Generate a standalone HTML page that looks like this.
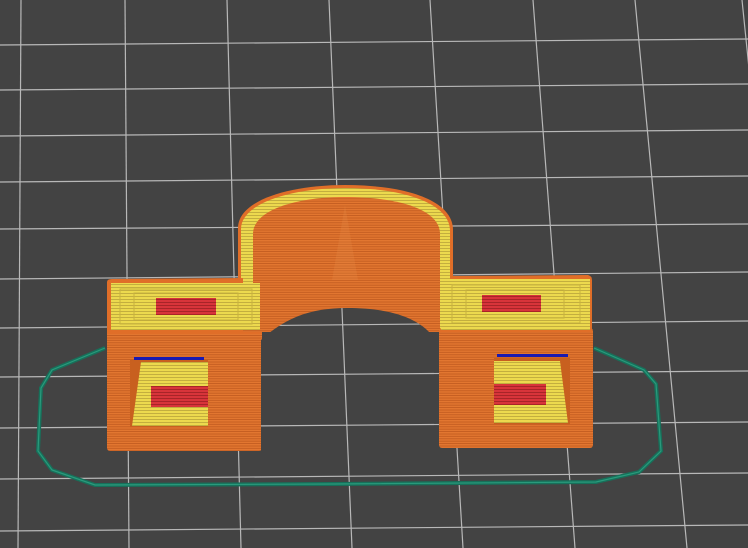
<!DOCTYPE html>
<html><head><style>
html,body{margin:0;padding:0;background:#434343;}
svg{display:block;}
</style></head><body>
<svg width="748" height="548" viewBox="0 0 748 548" xmlns="http://www.w3.org/2000/svg">
<defs>
<pattern id="or" width="4" height="2.4" patternUnits="userSpaceOnUse">
<rect width="4" height="2.4" fill="#e27630"/>
<rect y="1.6" width="4" height="0.8" fill="#bf5a1e"/>
</pattern>
<pattern id="yl" width="4" height="3" patternUnits="userSpaceOnUse">
<rect width="4" height="3" fill="#ecd94e"/>
<rect y="2.2" width="4" height="0.8" fill="#b9a43a"/>
</pattern>
<pattern id="rd" width="3" height="3" patternUnits="userSpaceOnUse">
<rect width="3" height="3" fill="#d8343a"/>
<rect y="2" width="3" height="1" fill="#a82428"/>
</pattern>
<clipPath id="hole"><path d="M261,452 L261,340 C285,318 310,308 347,308 C390,308 420,318 434,338 L434,452 Z"/></clipPath>
<g id="grid" stroke="#b8b8b8" stroke-width="1.2" fill="none">
<line x1="21" y1="0" x2="18" y2="548"/>
<line x1="125" y1="0" x2="129" y2="548"/>
<line x1="227" y1="0" x2="241" y2="548"/>
<line x1="329" y1="0" x2="352" y2="548"/>
<line x1="430" y1="0" x2="463" y2="548"/>
<line x1="533" y1="0" x2="575" y2="548"/>
<line x1="635" y1="0" x2="687" y2="548"/>
<line x1="742" y1="0" x2="798" y2="548"/>
<line x1="0" y1="45" x2="748" y2="39"/>
<line x1="0" y1="90" x2="748" y2="84"/>
<line x1="0" y1="136" x2="748" y2="130"/>
<line x1="0" y1="182" x2="748" y2="176"/>
<line x1="0" y1="229" x2="748" y2="224"/>
<line x1="0" y1="279" x2="748" y2="272"/>
<line x1="0" y1="328" x2="748" y2="321"/>
<line x1="0" y1="377" x2="748" y2="371"/>
<line x1="0" y1="428" x2="748" y2="422"/>
<line x1="0" y1="479" x2="748" y2="473"/>
<line x1="0" y1="531" x2="748" y2="525"/>
</g>
</defs>
<rect width="748" height="548" fill="#434343"/>
<use href="#grid"/>
<path d="M105,348 L52,370 L41,388 L38,451 L52,470 L95,485 L334,484 L596,482 L639,472 L661,451 L656,384 L644,370 L594,348" fill="none" stroke="#17705a" stroke-width="4"/>
<path d="M105,348 L52,370 L41,388 L38,451 L52,470 L95,485 L334,484 L596,482 L639,472 L661,451 L656,384 L644,370 L594,348" fill="none" stroke="#2a9a7c" stroke-width="1.2"/>
<path d="M238,332 L238,228 C238,200 290,185 345,185 C405,185 453,200 453,230 L453,332 Z" fill="#e06e28"/>
<path d="M241,332 L241,229 C241,203 292,188 345,188 C403,188 450,203 450,231 L450,332 Z" fill="url(#yl)"/>
<path d="M253,332 L253,234 C253,210 296,197 345,197 C400,197 440,210 440,234 L440,332 Z" fill="url(#or)"/>
<path d="M332,280 L345,205 L358,280 Z" fill="#e98a48" opacity="0.25"/>
<rect x="107" y="330" width="155" height="121" rx="3" fill="url(#or)"/>
<path d="M107,282 Q107,279 112,279 L243,278 L243,332 L262,332 L262,334 L107,334 Z" fill="#e06e28"/>
<rect x="111" y="283" width="149" height="47" fill="url(#yl)"/>
<rect x="120" y="289" width="132" height="35" fill="none" stroke="#c8b23e" stroke-width="1"/>
<rect x="134" y="293" width="104" height="27" fill="none" stroke="#c8b23e" stroke-width="1"/>
<rect x="156" y="298" width="60" height="17" fill="url(#rd)"/>
<path d="M130,360 L208,360 L208,427 L130,427 Z" fill="#c8601f"/>
<path d="M141,362 L208,362 L208,426 L132,426 Z" fill="url(#yl)"/>
<rect x="151" y="386" width="57" height="21" fill="url(#rd)"/>
<rect x="134" y="357" width="70" height="3" fill="#1a1ab0"/>
<rect x="439" y="328" width="154" height="120" rx="3" fill="url(#or)"/>
<path d="M453,276 L588,275 Q592,276 592,280 L592,332 L439,332 L439,330 L453,330 Z" fill="#e06e28"/>
<rect x="441" y="279" width="149" height="51" fill="url(#yl)"/>
<rect x="452" y="285" width="128" height="38" fill="none" stroke="#c8b23e" stroke-width="1"/>
<rect x="466" y="290" width="98" height="28" fill="none" stroke="#c8b23e" stroke-width="1"/>
<rect x="482" y="295" width="59" height="17" fill="url(#rd)"/>
<path d="M494,358 L570,358 L570,424 L494,424 Z" fill="#c8601f"/>
<path d="M494,361 L560,361 L568,423 L494,423 Z" fill="url(#yl)"/>
<rect x="494" y="384" width="52" height="21" fill="url(#rd)"/>
<rect x="497" y="354" width="71" height="3" fill="#1a1ab0"/>
<path d="M261,452 L261,340 C285,318 310,308 347,308 C390,308 420,318 434,338 L434,452 Z" fill="#434343"/>
<use href="#grid" clip-path="url(#hole)"/>
</svg>
</body></html>
